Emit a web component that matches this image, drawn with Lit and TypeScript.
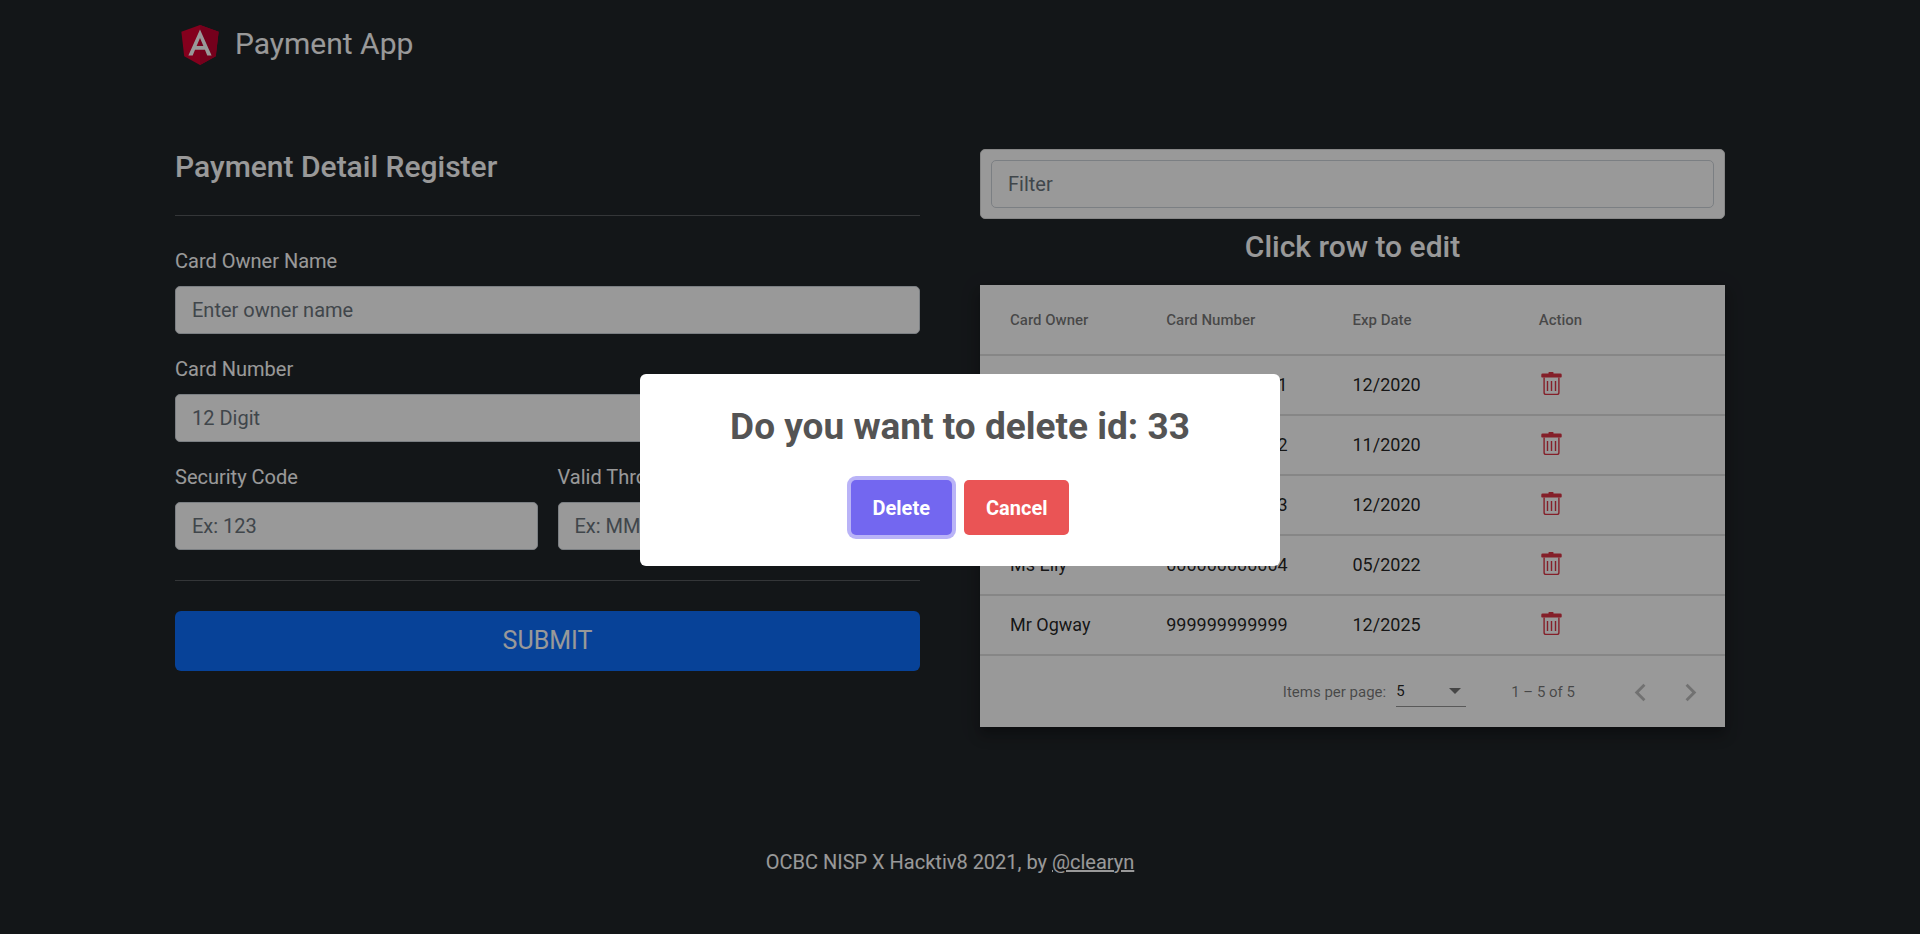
import { LitElement, html, css, svg } from "lit";
import { customElement } from "lit/decorators.js";

interface Payment {
  owner: string;
  card: string;
  exp: string;
}

const PAYMENTS: Payment[] = [
  { owner: "Mr Po", card: "000000000001", exp: "12/2020" },
  { owner: "Mr Ping", card: "000000000002", exp: "11/2020" },
  { owner: "Ms Mei", card: "000000000003", exp: "12/2020" },
  { owner: "Ms Elly", card: "000000000004", exp: "05/2022" },
  { owner: "Mr Ogway", card: "999999999999", exp: "12/2025" },
];

const trashIcon = svg`<svg class="trash" viewBox="0 0 24 26" aria-hidden="true">
  <path fill="currentColor" d="M9.500 1.500V0.600Q9.500 0 10.100 0h3.800Q14.500 0 14.500 0.600V1.500H21.500Q22.700 1.500 22.700 2.700V4.800Q22.700 5.600 21.900 5.600H3.100Q2.300 5.600 2.300 4.800V2.700Q2.300 1.500 3.500 1.500Z"/>
  <path fill="none" stroke="currentColor" stroke-width="1.400" d="M5.100 5.600V20.500Q5.100 22.400 7 22.400H18Q19.900 22.400 19.900 20.500V5.600M8.500 9V19M12.500 9V19M16.500 9V19"/>
</svg>`;

@customElement("app-root")
export class AppRoot extends LitElement {
  static styles = css`
    *,
    *::before,
    *::after {
      box-sizing: border-box;
    }
    :host {
      display: block;
      min-height: 100vh;
      background: #212529;
      color: #fff;
      font-family: Roboto, "Liberation Sans", sans-serif;
      font-size: 20px;
      line-height: 30px;
    }
    input,
    button,
    select {
      font: inherit;
    }
    .page {
      padding-right: 20px;
    }
    .container {
      max-width: 1650px;
      margin: 0 auto;
      padding: 0 50px;
    }
    .brand {
      display: flex;
      align-items: center;
      gap: 10px;
      width: max-content;
      padding: 19px 0;
      color: #fff;
      text-decoration: none;
      font-size: 30px;
      line-height: 50px;
    }
    .logo {
      width: 50px;
      height: 50px;
    }
    .columns {
      display: grid;
      grid-template-columns: repeat(2, minmax(0, 1fr));
      gap: 60px;
      padding-top: 61px;
      align-items: start;
    }
    h2 {
      margin: 0;
      font-size: 30px;
      font-weight: 500;
      line-height: 36px;
    }
    .rule {
      border: 0;
      border-top: 1px solid #fff;
      opacity: 0.25;
      margin: 30px 0;
    }
    .fields {
      display: grid;
      grid-template-columns: repeat(2, minmax(0, 1fr));
      column-gap: 20px;
      row-gap: 20px;
    }
    .field {
      display: grid;
      gap: 10px;
    }
    .wide {
      grid-column: 1 / -1;
    }
    .control {
      width: 100%;
      height: 48px;
      padding: 8px 16px;
      border: 1px solid #ced4da;
      border-radius: 5px;
      background: #fff;
      color: #212529;
    }
    .control::placeholder {
      color: #6c757d;
      opacity: 1;
    }
    .submit {
      display: block;
      width: 100%;
      height: 60px;
      border: 0;
      border-radius: 6px;
      background: #0d6efd;
      color: #fff;
      font-size: 25px;
    }
    .filter {
      padding: 10px;
      border: 1px solid #dfdfdf;
      border-radius: 5px;
      background: #fff;
    }
    .filter .control {
      display: block;
    }
    .hint {
      padding: 10px 0 20px;
      text-align: center;
    }
    .card {
      background: #fff;
      color: rgba(0, 0, 0, 0.87);
      box-shadow: 0 6px 6px -4px rgba(0, 0, 0, 0.2), 0 10px 12px 1px rgba(0, 0, 0, 0.14),
        0 4px 18px 2px rgba(0, 0, 0, 0.12);
    }
    table {
      width: 100%;
      table-layout: fixed;
      border-collapse: separate;
      border-spacing: 0;
      font-size: 18px;
    }
    th,
    td {
      height: 60px;
      padding: 0;
      border-bottom: 2px solid #dfdfdf;
      text-align: left;
      vertical-align: middle;
    }
    th {
      height: 71px;
      color: rgba(0, 0, 0, 0.54);
      font-size: 15px;
      font-weight: 500;
    }
    th:first-child,
    td:first-child {
      padding-left: 30px;
    }
    .icon-button {
      display: flex;
      padding: 0;
      border: 0;
      background: none;
      color: #dc3545;
    }
    .trash {
      width: 24px;
      height: 26px;
    }
    .paginator {
      display: flex;
      align-items: center;
      justify-content: flex-end;
      height: 71px;
      padding-right: 10px;
      color: rgba(0, 0, 0, 0.54);
      font-size: 15px;
      line-height: 20px;
    }
    .size {
      display: flex;
      align-items: center;
      gap: 10px;
    }
    .select-box {
      position: relative;
      width: 70px;
      border-bottom: 1px solid rgba(0, 0, 0, 0.42);
    }
    .select-box select {
      display: block;
      width: 100%;
      height: 30px;
      padding: 0;
      border: 0;
      appearance: none;
      background: none;
      color: rgba(0, 0, 0, 0.87);
    }
    .select-box svg {
      position: absolute;
      right: 5px;
      top: 12px;
      width: 12px;
      height: 6px;
      fill: rgba(0, 0, 0, 0.54);
      pointer-events: none;
    }
    .range {
      margin: 0 40px 0 45px;
    }
    .pager {
      display: inline-flex;
      align-items: center;
      justify-content: center;
      width: 50px;
      height: 50px;
      padding: 2px 0 0;
      border: 0;
      background: none;
      color: rgba(0, 0, 0, 0.26);
    }
    .pager svg {
      width: 35px;
      height: 35px;
      fill: currentColor;
    }
    footer {
      padding-top: 120px;
      text-align: center;
    }
    footer a {
      color: #fff;
    }
    .backdrop {
      position: fixed;
      inset: 0;
      display: flex;
      align-items: center;
      justify-content: center;
      padding: 16px 10px 10px;
      background: rgba(0, 0, 0, 0.4);
    }
    .dialog {
      width: 640px;
      max-width: 100%;
      padding: 30px 20px 31px;
      border-radius: 6px;
      background: #fff;
      color: #545454;
      text-align: center;
    }
    .dialog h1 {
      margin: 0 0 30px;
      font-size: 37px;
      font-weight: 700;
      line-height: 46px;
    }
    .actions {
      display: flex;
      justify-content: center;
      gap: 12px;
    }
    .action {
      height: 55px;
      padding: 0 22px;
      border: 0;
      border-radius: 5px;
      color: #fff;
      font-weight: 700;
      outline: none;
    }
    .confirm {
      background: #7367f0;
      box-shadow: 0 0 0 4px rgba(115, 103, 240, 0.5);
    }
    .cancel {
      background: #ea5455;
    }
  `;

  private field(id: string, label: string, placeholder: string, wide = false) {
    return html`<div class=${wide ? "field wide" : "field"}>
      <label for=${id}>${label}</label>
      <input class="control" id=${id} type="text" placeholder=${placeholder} />
    </div>`;
  }

  render() {
    return html`
      <div class="page">
        <div class="container">
          <header>
            <a class="brand" href="#">
              <svg class="logo" viewBox="0 0 250 250" aria-hidden="true">
                <path fill="#dd0031" d="M125 30 31.900 63.200l14.200 123.100L125 230l78.900-43.700 14.200-123.100z" />
                <path fill="#c3002f" d="M125 30v200l78.900-43.700 14.200-123.100z" />
                <path
                  fill="#fff"
                  d="M125 52.100 66.800 182.600h21.700l11.700-29.200h49.400l11.700 29.200H183zm17 83.300h-34l17-40.900z"
                />
              </svg>
              Payment App
            </a>
          </header>
          <main class="columns">
            <form>
              <h2>Payment Detail Register</h2>
              <hr class="rule" />
              <div class="fields">
                ${this.field("owner", "Card Owner Name", "Enter owner name", true)}
                ${this.field("number", "Card Number", "12 Digit", true)}
                ${this.field("code", "Security Code", "Ex: 123")}
                ${this.field("valid", "Valid Through", "Ex: MM/YYYY")}
              </div>
              <hr class="rule" />
              <button class="submit" type="button">SUBMIT</button>
            </form>
            <section>
              <div class="filter">
                <input class="control" type="text" aria-label="Filter" placeholder="Filter" />
              </div>
              <h2 class="hint">Click row to edit</h2>
              <div class="card">
                <table>
                  <thead>
                    <tr>
                      <th>Card Owner</th>
                      <th>Card Number</th>
                      <th>Exp Date</th>
                      <th>Action</th>
                    </tr>
                  </thead>
                  <tbody>
                    ${PAYMENTS.map(
                      (p) => html`<tr>
                        <td>${p.owner}</td>
                        <td>${p.card}</td>
                        <td>${p.exp}</td>
                        <td>
                          <button class="icon-button" type="button" aria-label="Delete payment">
                            ${trashIcon}
                          </button>
                        </td>
                      </tr>`
                    )}
                  </tbody>
                </table>
                <div class="paginator">
                  <div class="size">
                    <label for="size">Items per page:</label>
                    <div class="select-box">
                      <select id="size">
                        <option>5</option>
                        <option>10</option>
                      </select>
                      <svg viewBox="0 0 12 6" aria-hidden="true"><path d="M0 0h12L6 6z" /></svg>
                    </div>
                  </div>
                  <span class="range">1 – 5 of 5</span>
                  <button class="pager" type="button" aria-label="Previous page">
                    <svg viewBox="0 0 24 24"><path d="M15.410 7.410 14 6l-6 6 6 6 1.410-1.410L10.830 12z" /></svg>
                  </button>
                  <button class="pager" type="button" aria-label="Next page">
                    <svg viewBox="0 0 24 24"><path d="M10 6 8.590 7.410 13.170 12l-4.580 4.590L10 18l6-6z" /></svg>
                  </button>
                </div>
              </div>
            </section>
          </main>
          <footer>OCBC NISP X Hacktiv8 2021, by <a href="#">@clearyn</a></footer>
        </div>
      </div>
      <div class="backdrop">
        <div class="dialog" role="dialog" aria-modal="true" aria-labelledby="question">
          <h1 id="question">Do you want to delete id: 33</h1>
          <div class="actions">
            <button class="action confirm" type="button">Delete</button>
            <button class="action cancel" type="button">Cancel</button>
          </div>
        </div>
      </div>
    `;
  }
}
